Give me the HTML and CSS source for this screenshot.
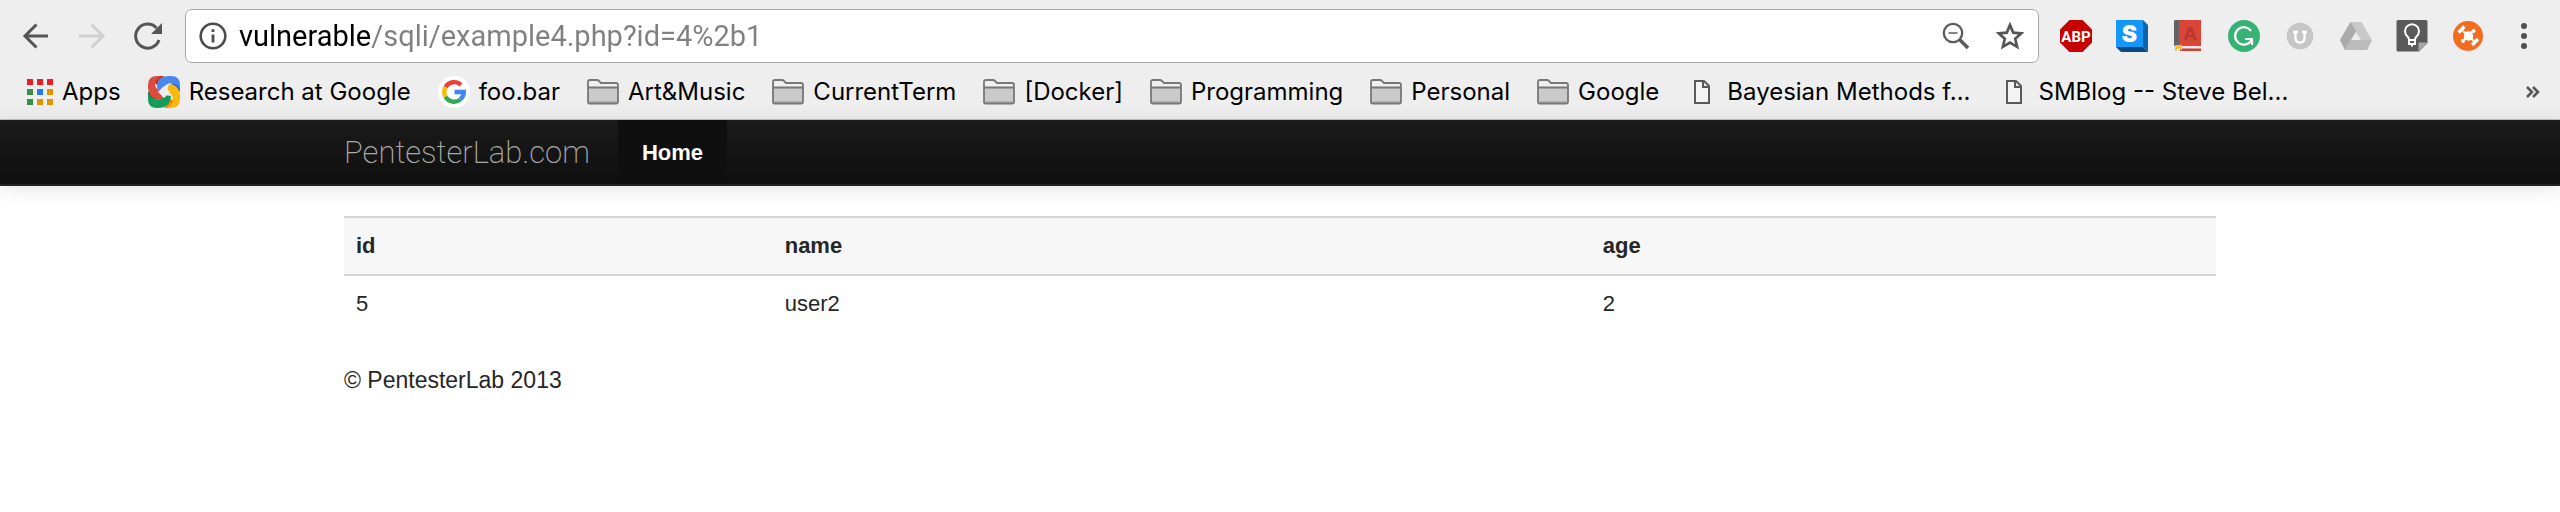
FILE: index.html
```html
<!DOCTYPE html>
<html lang="en">
<head>
<meta charset="utf-8">
<title>PentesterLab</title>
<link rel="stylesheet" href="styles.css">
</head>
<body>
<svg class="sprite" aria-hidden="true">
  <symbol id="folder" viewBox="0 0 32 26">
    <path d="M1 24V3Q1 1 3 1h8l3 3h16q1 0 1 1v19q0 1-1 1H2q-1 0-1-1z" fill="#efefef"/>
    <path d="M1 8h30v16H1z" fill="#cacaca"/><path d="M1 22h30v2H1z" fill="#b5b5b5"/>
    <path d="M1 23V3q0-2 2-2h7q1 0 2 1l2 2h15q2 0 2 2v17q0 1.500-1.500 1.500h-27Q1 24.500 1 23zM1 8.500h30" fill="none" stroke="#777" stroke-width="1.800"/>
  </symbol>
  <symbol id="doc" viewBox="0 0 32 26">
    <path d="M9 2h9l5 5v17H9zM17 2v6h6" fill="#f3f3f3" stroke="#5a5a5a" stroke-width="2"/>
  </symbol>
</svg>
<header class="browser">
  <div class="toolbar">
    <button class="tool" aria-label="Back"><svg viewBox="0 0 32 32" width="32" height="32"><path d="M28 16H5M16.500 4.500 5 16l11.500 11.500" fill="none" stroke="#555" stroke-width="3"/></svg></button>
    <button class="tool" aria-label="Forward"><svg viewBox="0 0 32 32" width="32" height="32"><path d="M3 16h24M15.500 4.500 27 16 15.500 27.500" fill="none" stroke="#d0d0d0" stroke-width="3"/></svg></button>
    <button class="tool" aria-label="Reload"><svg viewBox="0 0 32 32" width="32" height="32"><path d="M27 20A12 12 0 1 1 24.500 8" fill="none" stroke="#555" stroke-width="3"/><path d="M30 3v11H19z" fill="#555"/></svg></button>
    <div class="omnibox">
      <svg viewBox="0 0 28 28" width="28" height="28"><circle cx="14" cy="14" r="12.300" fill="none" stroke="#4c4c4c" stroke-width="2.600"/><path d="M12.600 12.500h2.800v8h-2.800zM12.600 7.300h2.800v2.800h-2.800z" fill="#4c4c4c"/></svg>
      <input class="url" type="text" aria-label="Address" value="vulnerable/sqli/example4.php?id=4%2b1">
      <button class="inner" aria-label="Zoom"><svg viewBox="0 0 28 28" width="28" height="28"><circle cx="12" cy="11" r="9.200" fill="none" stroke="#5a5a5a" stroke-width="2.300"/><path d="M7.500 11h9" stroke="#5a5a5a" stroke-width="1.500"/><path d="m18.500 17.500 8.500 8.500" stroke="#5a5a5a" stroke-width="3.500"/></svg></button>
      <button class="inner" aria-label="Bookmark this page"><svg viewBox="0 0 28 28" width="28" height="28"><path d="m14 3 3.200 7.600 8.200.7-6.200 5.400 1.900 8.100L14 20.500l-7.100 4.300 1.900-8.100-6.200-5.400 8.200-.7z" fill="none" stroke="#555" stroke-width="2.700"/></svg></button>
    </div>
    <div class="extensions">
      <button class="ext" aria-label="Adblock Plus"><svg viewBox="0 0 32 32" width="32" height="32"><path d="M9.500 0h13L32 9.500v13L22.500 32h-13L0 22.500v-13z" fill="#c70000"/><text x="16" y="21.500" text-anchor="middle" class="abp">ABP</text></svg></button>
      <button class="ext" aria-label="Stylish"><svg viewBox="0 0 32 32" width="32" height="32"><path d="M0 0h27v27H0z" fill="#1497fb"/><path d="m27 0 5 5v27l-5-5z" fill="#0d63a8"/><path d="M0 27h27l5 5H5z" fill="#0b4a80"/><text x="13.500" y="22" text-anchor="middle" class="ess">S</text></svg></button>
      <button class="ext" aria-label="Dictionary"><svg viewBox="0 0 32 32" width="32" height="32"><path d="M2 1q0-1 2-1h4v26H2z" fill="#636363"/><path d="M7 0h22v26H7z" fill="#db4537"/><path d="M3 26h26v3H3z" fill="#e8e8e8"/><path d="M8 28.500h21V31H8z" fill="#d23f31"/><path d="M3 25h7v6l-3-3-3 3H3z" fill="#f5c02c"/><text x="18" y="20" text-anchor="middle" class="dict">A</text></svg></button>
      <button class="ext" aria-label="Grammarly"><svg viewBox="0 0 32 32" width="32" height="32"><circle cx="16" cy="16" r="16" fill="#36b374"/><path d="M23 11A8.700 8.700 0 1 0 23.500 20M17 19h7v6" fill="none" stroke="#fff" stroke-width="2.200"/></svg></button>
      <button class="ext" aria-label="Unpaywall"><svg viewBox="0 0 32 32" width="32" height="32"><circle cx="16" cy="16" r="13.300" fill="#c6c6c6"/><path d="M9 12h5M18 12h5M11.500 12v6q0 4.500 4.500 4.500t4.500-4.500v-6" fill="none" stroke="#fff" stroke-width="2.300"/></svg></button>
      <button class="ext" aria-label="Google Drive"><svg viewBox="0 0 32 32" width="32" height="32"><path d="M10.500 2h11L32 20l-5 10H5L0 20z" fill="#c9c9c9"/><path d="M10.500 2 16 11.500 5 30 0 20z" fill="#ababab"/><path d="M10.500 20H32l-5 10H5z" fill="#bcbcbc"/><path d="m16 12 5 8H11z" fill="#eee"/></svg></button>
      <button class="ext" aria-label="Google Keep"><svg viewBox="0 0 32 32" width="32" height="32"><path d="M2 0h28q1.500 0 1.500 1.500V23L23 31.500H2Q.5 31.500.5 30V1.500Q.5 0 2 0z" fill="#5a5a5a"/><path d="M31.500 22.500h-9v9z" fill="#a8a8a8"/><path d="M13 20q0-2-1.500-3.500a7 7 0 1 1 9 0Q19 18 19 20zM13 21v3h6v-3M15 25.500h2" fill="none" stroke="#fff" stroke-width="2"/></svg></button>
      <button class="ext" aria-label="Network tool"><svg viewBox="0 0 32 32" width="32" height="32"><circle cx="16" cy="16" r="15" fill="#f26d1e"/><circle cx="16.500" cy="16" r="4.700" fill="#fff"/><path d="m11 11 11 10M22 10 11 21" stroke="#fff" stroke-width="2"/><circle cx="21.500" cy="11" r="2" fill="#fff"/><circle cx="11" cy="21" r="2" fill="#fff"/><path d="m6.500 12.500 6-6M20 25l6-6" stroke="#fff" stroke-width="3.500"/></svg></button>
      <button class="ext" aria-label="Menu"><svg viewBox="0 0 32 32" width="32" height="32"><g fill="#505050"><circle cx="16" cy="6" r="3"/><circle cx="16" cy="16" r="3"/><circle cx="16" cy="26" r="3"/></g></svg></button>
    </div>
  </div>
  <nav class="bookmarks" aria-label="Bookmarks">
    <a class="mark" href="#"><svg viewBox="0 0 26 26" width="26" height="26"><path d="M0 0h6v6H0zM10 0h6v6h-6zM20 0h6v6h-6z" fill="#ed1c24"/><path d="M0 10h6v6H0zM0 20h6v6H0z" fill="#34914a"/><path d="M10 10h6v6h-6z" fill="#2079f5"/><path d="M20 10h6v6h-6zM10 20h6v6h-6zM20 20h6v6h-6z" fill="#e69200"/></svg>Apps</a>
    <a class="mark" href="#"><svg viewBox="0 0 32 32" width="32" height="32"><path d="M9 0h6l4 3-8 7-6-4z" fill="#b8372c"/><path d="M32 9v7l-6-5-4-5z" fill="#3367c8"/><path d="M23 32h-7l6-9 7 2z" fill="#f08a0c"/><path d="M0 23v-7l5 0 5 8z" fill="#0f8048"/><path d="M9 11Q9 0 21 0h2q9 0 9 9v4q-3-6-9-6-5 0-9 7l-4 1z" fill="#4b86ee"/><path d="M21 8q11 1 11 13v2q0 9-9 9h-4q6-3 6-9 0-4-6-8z" fill="#f8b90c"/><path d="M23 20q-1 12-13 12H9q-9 0-9-9v-5q4 6 9 6 4 0 8-5z" fill="#129d58"/><path d="M11 24Q0 22 0 11V9q0-9 9-9h4Q7 3 7 9q0 3 6 7l2 6z" fill="#dc4b3e"/><path d="m16 10 6 6-6 6-6-6z" fill="#eee"/></svg>Research at Google</a>
    <a class="mark" href="#"><svg viewBox="0 0 32 32" width="32" height="32"><circle cx="16" cy="16" r="16" fill="#fff"/><g fill="none" stroke-width="4.400"><path d="M23 9A9.800 9.800 0 0 0 7.500 11.300" stroke="#ea4335"/><path d="M7.500 11.300a9.800 9.800 0 0 0 0 9.400" stroke="#fbbc05"/><path d="M7.500 20.700A9.800 9.800 0 0 0 22.500 23.300" stroke="#34a853"/><path d="M22.500 23.300Q25.800 20.500 25.800 16H16.500" stroke="#4285f4"/></g></svg>foo.bar</a>
    <a class="mark" href="#"><svg width="32" height="26"><use href="#folder"/></svg>Art&amp;Music</a>
    <a class="mark" href="#"><svg width="32" height="26"><use href="#folder"/></svg>CurrentTerm</a>
    <a class="mark" href="#"><svg width="32" height="26"><use href="#folder"/></svg>[Docker]</a>
    <a class="mark" href="#"><svg width="32" height="26"><use href="#folder"/></svg>Programming</a>
    <a class="mark" href="#"><svg width="32" height="26"><use href="#folder"/></svg>Personal</a>
    <a class="mark" href="#"><svg width="32" height="26"><use href="#folder"/></svg>Google</a>
    <a class="mark" href="#"><svg width="32" height="26"><use href="#doc"/></svg>Bayesian Methods f...</a>
    <a class="mark" href="#"><svg width="32" height="26"><use href="#doc"/></svg>SMBlog -- Steve Bel...</a>
    <button class="more" aria-label="More bookmarks"><svg viewBox="0 0 14 14" width="14" height="14"><path d="m1 2 5 5-5 5M7 2l5 5-5 5" fill="none" stroke="#555" stroke-width="2.500"/></svg></button>
  </nav>
</header>
<nav class="navbar">
  <div class="container nav-row">
    <a class="brand" href="#">PentesterLab.com</a>
    <a class="nav-link" href="#">Home</a>
  </div>
</nav>
<main class="container content">
  <table class="users">
    <colgroup><col class="col-id"><col class="col-name"><col class="col-age"></colgroup>
    <thead><tr><th>id</th><th>name</th><th>age</th></tr></thead>
    <tbody><tr><td>5</td><td>user2</td><td>2</td></tr></tbody>
  </table>
  <footer class="footer">© PentesterLab 2013</footer>
</main>
</body>
</html>
```

FILE: styles.css
```css
* { box-sizing: border-box; }
body { margin: 0; background: #fff; color: #262626; font: 22px/34px "Liberation Sans", Arial, sans-serif; }
button { padding: 0; border: 0; background: none; display: flex; }
a { color: inherit; text-decoration: none; }
svg { flex: none; display: block; }
.sprite { display: none; }

.browser { background: #eee; border-bottom: 1px solid #c4c4c4; color: #000; font-family: Inter, Roboto, sans-serif; }
.toolbar { display: flex; align-items: center; padding: 9px 20px 0; gap: 24px; }
.omnibox { flex: 1; display: flex; align-items: center; height: 54px; margin: 0 -3px; padding: 0 14px 0 13px; border: 1px solid #a6a6a6; border-radius: 7px; background: #fff; }
.url { flex: 1; min-width: 0; height: 44px; margin-left: 12px; padding: 0; border: 0; outline: 0; font: 29px/44px Roboto, sans-serif; color: #808080; background: linear-gradient(90deg, #000 132px, #808080 132px); -webkit-background-clip: text; background-clip: text; -webkit-text-fill-color: transparent; }
.inner { margin-left: 27px; }
.extensions { display: flex; gap: 24px; }
.abp { font: bold 15px Roboto, sans-serif; fill: #fff; }
.ess { font: 900 23px Inter, sans-serif; fill: #fff; }
.dict { font: bold 19px "Liberation Sans", sans-serif; fill: #b5382d; }

.bookmarks { display: flex; align-items: center; height: 56px; padding: 1px 20px 0 27px; gap: 27px; font-size: 24px; line-height: 32px; white-space: nowrap; }
.mark { display: flex; align-items: center; gap: 9px; }
.more { margin-left: auto; }

.container { width: 73.125%; margin: 0 auto; }
.navbar { background: linear-gradient(#1b1b1b, #0f0f0f); border-bottom: 2px solid #222; box-shadow: 0 2px 18px rgba(0, 0, 0, .12); }
.nav-row { display: flex; height: 64px; gap: 28px; }
.brand { color: #aaa; font: 200 31px/66px Roboto, sans-serif; }
.nav-link { padding: 0 24px; background: #0f0f0f; color: #fff; font-weight: bold; line-height: 66px; }

.content { padding-top: 30px; }
.users { width: 100%; table-layout: fixed; border-collapse: collapse; text-align: left; }
.col-id { width: 22.9%; }
.col-name { width: 43.7%; }
.users th, .users td { padding: 11px 12px; }
.users th { background: #f7f7f7; border-top: 2px solid #d4d4d4; border-bottom: 2px solid #d4d4d4; }
.footer { padding-top: 31px; font-size: 23px; }
```
